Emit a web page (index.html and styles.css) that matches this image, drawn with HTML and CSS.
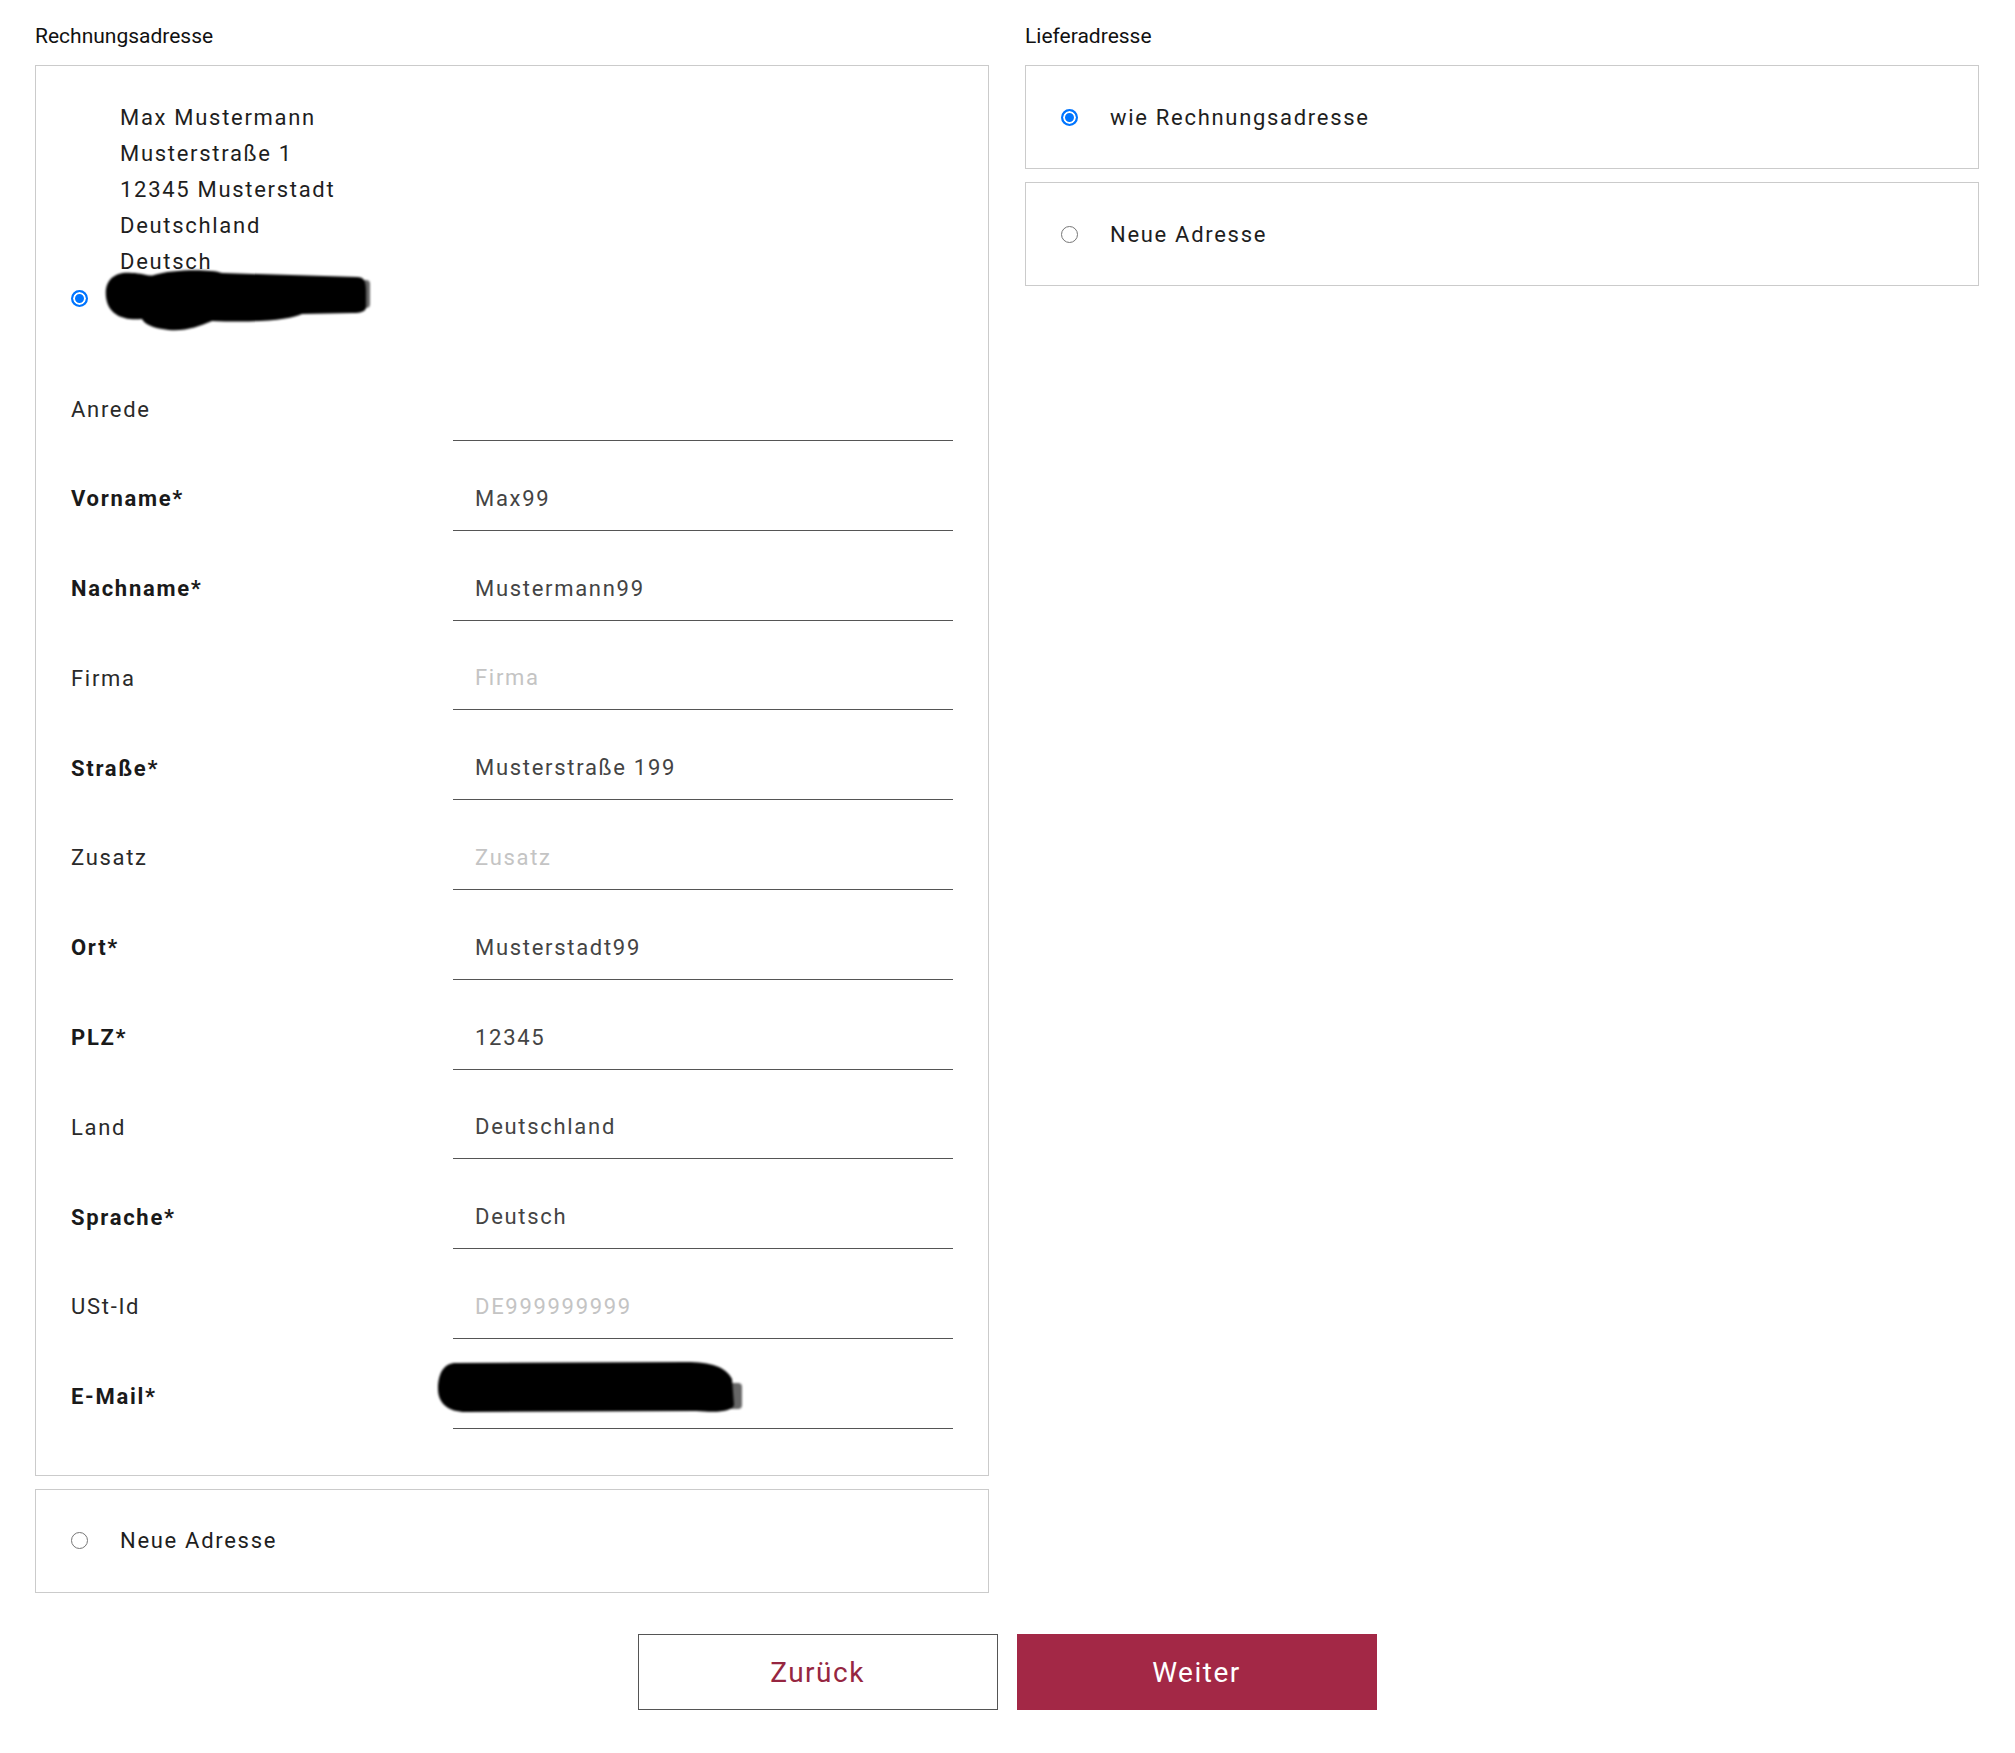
FILE: index.html
```html
<!DOCTYPE html>
<html lang="de">
  <head>
    <meta charset="UTF-8" />
    <meta name="viewport" content="width=device-width, initial-scale=1.0" />
    <title>Adressen</title>
    <link rel="stylesheet" href="styles.css">
  </head>
  <body>
    <div class="checkout">
      <div class="columns">
        <!-- Rechnungsadresse -->
        <section class="column">
          <h3 class="column-title">Rechnungsadresse</h3>

          <div class="address-box address-box--open">
            <div class="saved-address">
              <div class="address-line">Max Mustermann</div>
              <div class="address-line">Musterstraße 1</div>
              <div class="address-line">12345 Musterstadt</div>
              <div class="address-line">Deutschland</div>
              <div class="address-line">Deutsch</div>
              <div class="address-line address-line--select">
                <input type="radio" name="billing" checked />
                <svg class="redacted" width="270" height="66" viewBox="0 0 270 66">
                  <defs>
                    <filter id="soft1"><feGaussianBlur stdDeviation="1.2" /></filter>
                  </defs>
                  <g filter="url(#soft1)">
                    <path d="M4,30 C2,12 14,4 30,6 C40,6 48,10 52,8 C70,2 110,2 120,6 L255,10 C262,10 264,14 264,24 L264,40 C264,44 260,46 250,46 L200,47 C190,52 160,56 110,54 C95,60 80,66 60,62 C48,60 42,56 40,52 C22,54 6,48 4,30 Z" fill="#000" />
                    <rect x="256" y="13" width="12" height="28" rx="4" fill="#000" opacity="0.6" />
                  </g>
                </svg>
              </div>
            </div>

            <div class="address-form">
              <div class="form-row">
                <label>Anrede</label>
                <input type="text" />
              </div>
              <div class="form-row">
                <label class="required">Vorname*</label>
                <input type="text" value="Max99" />
              </div>
              <div class="form-row">
                <label class="required">Nachname*</label>
                <input type="text" value="Mustermann99" />
              </div>
              <div class="form-row">
                <label>Firma</label>
                <input type="text" placeholder="Firma" />
              </div>
              <div class="form-row">
                <label class="required">Straße*</label>
                <input type="text" value="Musterstraße 199" />
              </div>
              <div class="form-row">
                <label>Zusatz</label>
                <input type="text" placeholder="Zusatz" />
              </div>
              <div class="form-row">
                <label class="required">Ort*</label>
                <input type="text" value="Musterstadt99" />
              </div>
              <div class="form-row">
                <label class="required">PLZ*</label>
                <input type="text" value="12345" />
              </div>
              <div class="form-row">
                <label>Land</label>
                <input type="text" value="Deutschland" />
              </div>
              <div class="form-row">
                <label class="required">Sprache*</label>
                <input type="text" value="Deutsch" />
              </div>
              <div class="form-row">
                <label>USt-Id</label>
                <input type="text" placeholder="DE999999999" />
              </div>
              <div class="form-row">
                <label class="required">E-Mail*</label>
                <div class="input-wrap">
                  <input type="text" />
                  <svg class="redacted-mail" width="310" height="60" viewBox="0 0 310 60">
                    <defs>
                      <filter id="soft2"><feGaussianBlur stdDeviation="1" /></filter>
                    </defs>
                    <g filter="url(#soft2)">
                      <path d="M20,4 L250,3 C275,3 290,8 296,20 L298,46 C296,52 285,54 260,52 L30,53 C12,53 2,44 2,30 C2,14 8,4 20,4 Z" fill="#000" />
                      <rect x="292" y="24" width="14" height="26" rx="4" fill="#000" opacity="0.6" />
                    </g>
                  </svg>
                </div>
              </div>
            </div>
          </div>

          <label class="address-box option">
            <input type="radio" name="billing" />
            <span>Neue Adresse</span>
          </label>
        </section>

        <!-- Lieferadresse -->
        <section class="column">
          <h3 class="column-title">Lieferadresse</h3>

          <label class="address-box option">
            <input type="radio" name="shipping" checked />
            <span>wie Rechnungsadresse</span>
          </label>
          <label class="address-box option">
            <input type="radio" name="shipping" />
            <span>Neue Adresse</span>
          </label>
        </section>
      </div>

      <div class="actions">
        <button class="btn btn-back">Zurück</button>
        <button class="btn btn-next">Weiter</button>
      </div>
    </div>
  </body>
</html>
```

FILE: styles.css
```css
body {
  margin: 0;
  padding: 0;
  background-color: #fff;
  font-family: "Roboto", "Liberation Sans", sans-serif;
  color: #222;
}
.checkout {
  padding: 21px 36px 0 35px;
}
.columns {
  display: grid;
  grid-template-columns: 954px 954px;
  column-gap: 36px;
  align-items: start;
}
.column-title {
  margin: 0 0 14px 0;
  font-size: 21px;
  font-weight: 400;
  line-height: 30px;
  color: #111;
}
.address-box {
  border: 1px solid #cbcbcb;
  box-sizing: border-box;
  background-color: #fff;
}
.address-box + .address-box {
  margin-top: 13px;
}
.address-box--open {
  padding: 34px 35px 46px 35px;
}
/* Radio-Buttons */
input[type="radio"] {
  appearance: none;
  -webkit-appearance: none;
  width: 17px;
  height: 17px;
  margin: 0;
  border: 1px solid #767676;
  border-radius: 50%;
  background-color: #fff;
  box-sizing: border-box;
  flex-shrink: 0;
}
input[type="radio"]:checked {
  border: 2px solid #0075ff;
  background-color: #0075ff;
  box-shadow: inset 0 0 0 2px #fff;
}
/* Gespeicherte Adresse */
.saved-address {
  padding-left: 49px;
}
.address-line {
  font-size: 22px;
  line-height: 36px;
  height: 36px;
  letter-spacing: 1.7px;
  color: #1e1e1e;
}
.address-line--select {
  display: flex;
  align-items: center;
  margin-left: -49px;
}
.address-line--select input {
  margin-right: 14px;
}
.redacted {
  display: block;
  margin: -13px 0 -17px 0;
}
/* Formular */
.address-form {
  margin-top: 61px;
}
.form-row {
  display: grid;
  grid-template-columns: 382px 1fr;
  align-items: center;
  height: 64px;
}
.form-row + .form-row {
  margin-top: 25.8px;
}
.form-row label {
  font-size: 22px;
  letter-spacing: 1.7px;
  color: #2a2a2a;
}
.form-row label.required {
  font-weight: 700;
  color: #1a1a1a;
}
.form-row input {
  width: 100%;
  height: 64px;
  box-sizing: border-box;
  padding: 0 22px;
  border: none;
  border-bottom: 1px solid #555;
  background-color: transparent;
  font-family: inherit;
  font-size: 22px;
  letter-spacing: 1.7px;
  color: #444;
  outline: none;
}
.form-row input::placeholder {
  color: #c4c4c4;
}
.input-wrap {
  position: relative;
}
.redacted-mail {
  position: absolute;
  left: -17px;
  top: -6px;
}
/* Auswahl-Boxen */
.option {
  display: flex;
  align-items: center;
  height: 104px;
  padding: 0 35px;
  font-size: 22px;
  letter-spacing: 1.7px;
  color: #1e1e1e;
  cursor: pointer;
}
.option input {
  margin-right: 32px;
}
/* Buttons */
.actions {
  display: flex;
  justify-content: center;
  gap: 19px;
  margin-top: 41px;
}
.btn {
  width: 360px;
  height: 76px;
  box-sizing: border-box;
  padding-top: 2px;
  font-family: inherit;
  font-size: 28px;
  letter-spacing: 1.5px;
  cursor: pointer;
}
.btn-back {
  background-color: #fff;
  border: 1px solid #555;
  color: #962641;
}
.btn-next {
  background-color: #a32846;
  border: 1px solid #a32846;
  color: #fff;
}
```
